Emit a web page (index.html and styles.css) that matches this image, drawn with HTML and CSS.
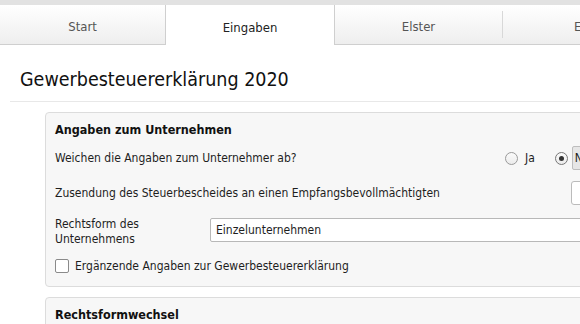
FILE: index.html
```html
<!DOCTYPE html>
<html lang="de">
<head>
<meta charset="utf-8">
<title>Gewerbesteuererklärung 2020</title>
<link rel="stylesheet" href="styles.css">
</head>
<body>
<div class="topbar"></div>
<nav class="tabs">
  <div class="tab">Start</div>
  <div class="tab active">Eingaben</div>
  <div class="tab">Elster</div>
  <div class="tab sep">Ergebnis</div>
</nav>
<h1 class="title">Gewerbesteuererklärung 2020</h1>
<div class="rule"></div>
<section class="panel">
  <h2 class="panel-head">Angaben zum Unternehmen</h2>
  <div class="row row-radio">
    <div class="label label-radio">Weichen die Angaben zum Unternehmer ab?</div>
    <div class="radios">
      <span class="radio"></span><span class="radio-text">Ja</span>
      <span class="radio checked"></span><span class="focus-box">Nein</span>
    </div>
  </div>
  <div class="row row-send">
    <div class="label label-send">Zusendung des Steuerbescheides an einen Empfangsbevollmächtigten</div>
    <div class="select-box"></div>
  </div>
  <div class="row row-form">
    <div class="label label-form">Rechtsform des<br>Unternehmens</div>
    <div class="text-input">Einzelunternehmen</div>
  </div>
  <div class="row row-check">
    <span class="checkbox"></span>
    <span class="check-text">Ergänzende Angaben zur Gewerbesteuererklärung</span>
  </div>
</section>
<section class="panel panel-second">
  <h2 class="panel-head">Rechtsformwechsel</h2>
</section>
</body>
</html>
```
FILE: styles.css
```css
html, body {
  margin: 0;
  padding: 0;
  background: #ffffff;
  overflow: hidden;
  width: 580px;
  height: 324px;
}
body {
  font-family: "DejaVu Sans Condensed", "DejaVu Sans", sans-serif;
  font-stretch: condensed;
  font-size: 12px;
  color: #1e1e1e;
}
.topbar {
  height: 5px;
  background: #e2e2e2;
}
.tabs {
  display: flex;
  height: 40px;
  width: 700px;
}
.tab {
  box-sizing: border-box;
  width: 168px;
  flex: none;
  display: flex;
  align-items: center;
  justify-content: center;
  font-size: 13px;
  color: #555;
  background: linear-gradient(#ffffff, #eeeeee);
  border-bottom: 1px solid #cfcfcf;
  padding-top: 4px;
}
.tab:first-child {
  width: 166px;
  border-right: 1px solid #cfcfcf;
}
.tab.active {
  background: #ffffff;
  border-bottom: none;
  color: #222;
}
.tab.active + .tab {
  border-left: 1px solid #cfcfcf;
}
.tab.sep {
  position: relative;
  justify-content: flex-start;
  padding-left: 72px;
}
.tab.sep::before {
  content: "";
  position: absolute;
  left: 0;
  top: 6px;
  bottom: 6px;
  width: 1px;
  background: #d8d8d8;
}
.title {
  margin: 0;
  padding: 0 0 0 20px;
  height: 56px;
  line-height: 70px;
  font-size: 19.5px;
  font-weight: normal;
  color: #111;
  white-space: nowrap;
}
.rule {
  margin-left: 10px;
  height: 1px;
  background: #e8e8e8;
}
.panel {
  box-sizing: border-box;
  margin: 10px 0 0 45px;
  width: 650px;
  background: #f7f7f7;
  border: 1px solid #dcdcdc;
  border-radius: 4px;
  padding: 0 10px 8px 9px;
}
.panel-head {
  margin: 0;
  padding-top: 2px;
  height: 30px;
  line-height: 30px;
  font-size: 12.5px;
  font-weight: bold;
  color: #111;
}
.row {
  display: flex;
  align-items: center;
  white-space: nowrap;
}
.row-radio { height: 26px; }
.row-send { height: 24px; margin-top: 10px; }
.row-form { align-items: flex-start; margin-top: 12px; }
.row-check { height: 24px; margin-top: 7px; }
.label { flex: none; }
.label-radio { width: 450px; }
.label-send { width: 516px; }
.label-form {
  width: 155px;
  line-height: 15px;
  white-space: normal;
}
.radios {
  display: flex;
  align-items: center;
}
.radio {
  box-sizing: border-box;
  width: 13px;
  height: 13px;
  border-radius: 50%;
  border: 1px solid #9a9a9a;
  background: linear-gradient(#fafafa, #ececec);
  position: relative;
}
.radio.checked {
  margin-left: 20px;
  border-color: #777;
}
.radio.checked::after {
  content: "";
  position: absolute;
  left: 3px;
  top: 3px;
  width: 5px;
  height: 5px;
  border-radius: 50%;
  background: #333;
}
.radio-text {
  margin-left: 7px;
}
.focus-box {
  box-sizing: border-box;
  margin-left: 4px;
  height: 24px;
  line-height: 22px;
  padding: 0 6px 0 2px;
  background: #e6e6e6;
  border: 1px solid #bdbdbd;
  border-radius: 2px;
}
.select-box {
  box-sizing: border-box;
  width: 60px;
  height: 24px;
  background: #fff;
  border: 1px solid #bbbbbb;
  border-radius: 3px;
}
.text-input {
  box-sizing: border-box;
  margin-top: 1px;
  width: 420px;
  height: 24px;
  line-height: 22px;
  padding-left: 5px;
  background: #fff;
  border: 1px solid #b8b8b8;
  border-radius: 2px;
}
.checkbox {
  box-sizing: border-box;
  width: 14px;
  height: 14px;
  border: 1px solid #8a8a8a;
  border-radius: 2px;
  background: #fff;
}
.check-text {
  margin-left: 6px;
}
.panel-second {
  margin-top: 10px;
  height: 60px;
}
```
